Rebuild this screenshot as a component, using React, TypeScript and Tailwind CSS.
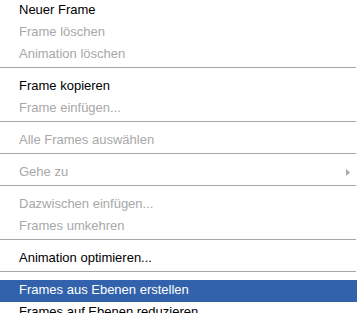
type Entry =
  | { kind: 'item'; label: string; disabled?: boolean; active?: boolean; submenu?: boolean }
  | { kind: 'sep' };

const entries: Entry[] = [
  { kind: 'item', label: 'Neuer Frame' },
  { kind: 'item', label: 'Frame löschen', disabled: true },
  { kind: 'item', label: 'Animation löschen', disabled: true },
  { kind: 'sep' },
  { kind: 'item', label: 'Frame kopieren' },
  { kind: 'item', label: 'Frame einfügen...', disabled: true },
  { kind: 'sep' },
  { kind: 'item', label: 'Alle Frames auswählen', disabled: true },
  { kind: 'sep' },
  { kind: 'item', label: 'Gehe zu', disabled: true, submenu: true },
  { kind: 'sep' },
  { kind: 'item', label: 'Dazwischen einfügen...', disabled: true },
  { kind: 'item', label: 'Frames umkehren', disabled: true },
  { kind: 'sep' },
  { kind: 'item', label: 'Animation optimieren...' },
  { kind: 'sep' },
  { kind: 'item', label: 'Frames aus Ebenen erstellen', active: true },
  { kind: 'item', label: 'Frames auf Ebenen reduzieren' },
];

export default function App() {
  return (
    <div className="w-[358px] h-[313px] overflow-hidden bg-white font-['Liberation_Sans',Arial,sans-serif] text-[13px]">
      <div className="w-[357px]">
        {entries.map((e, i) =>
          e.kind === 'sep' ? (
            <div key={i} className="h-[10px] pt-px mr-px">
              <div className="h-px bg-[#a6a6a6]" />
            </div>
          ) : (
            <div
              key={i}
              className={`h-[22px] leading-[19px] pl-[19px] pr-[7px] flex items-start justify-between whitespace-nowrap ${
                e.active ? 'bg-[#3262ab] text-white' : e.disabled ? 'text-[#a8a8a8]' : 'text-black'
              }`}
            >
              <span>{e.label}</span>
              {e.submenu && (
                <svg width="4" height="7" viewBox="0 0 4 7" className="mt-[7px]">
                  <polygon points="0,0 4,3.5 0,7" fill="#a8a8a8" />
                </svg>
              )}
            </div>
          )
        )}
      </div>
    </div>
  );
}
